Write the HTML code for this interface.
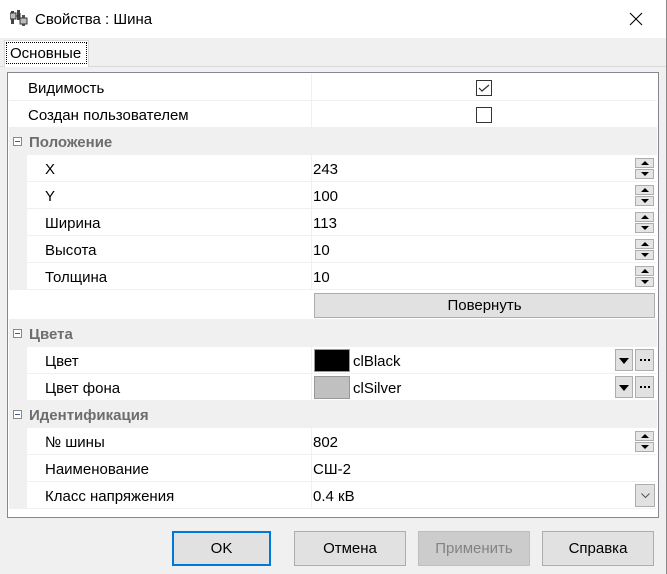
<!DOCTYPE html>
<html><head><meta charset="utf-8"><style>
*{margin:0;padding:0;box-sizing:border-box}
body{width:667px;height:574px;background:#f0f0f0;font-family:"Liberation Sans","Noto Sans CJK SC",sans-serif;font-size:15px;color:#000;position:relative;overflow:hidden}
.a{position:absolute}
.title{left:0;top:0;width:667px;height:38px;background:#fff}
.row{position:absolute;left:9px;width:648px;height:27px;border-bottom:1px solid #f0f0f0;background:#fff}
.row .l{position:absolute;top:6px}
.row .v{position:absolute;left:304px;top:6px}
.row .sep{position:absolute;left:302px;top:0;width:1px;height:26px;background:#f0f0f0}
.g{position:absolute;left:0;top:0;width:18px;height:27px;background:#f0f0f0}
.cat{background:#f0f0f0;border-bottom:none}
.cat .l{left:20px;font-weight:bold;color:#6d6d6d}
.mb{position:absolute;left:4px;top:9px;width:9px;height:9px;border:1px solid #8a8a8a;background:#fff}
.mb:after{content:"";position:absolute;left:1px;top:3px;width:5px;height:1px;background:#4a5a8a}
.spin{position:absolute;left:626px;top:3px;width:19px;height:21px}
.spin div{width:19px;height:10px;border:1px solid #adadad;background:#e5e5e5;position:relative;margin-bottom:1px}
.up:after{content:"";position:absolute;left:5px;top:2px;border:4px solid transparent;border-bottom:4px solid #000;border-top:0}
.dn:after{content:"";position:absolute;left:5px;top:2px;border:4px solid transparent;border-top:4px solid #000;border-bottom:0}
.btn{position:absolute;top:531px;height:35px;border:1px solid #adadad;background:#e1e1e1;text-align:center;line-height:34px}
.dots{position:absolute;left:626px;top:2px;width:19px;height:22px;background:#e1e1e1;border:1px solid #adadad}
.dots i{position:absolute;top:9px;width:2px;height:2px;background:#000}
</style></head><body>
<div class="a title"></div>
<svg class="a" style="left:10px;top:9px" width="20" height="18" viewBox="0 0 20 18"><rect x="1" y="2" width="3" height="13" fill="#444"/><rect x="7" y="1" width="3" height="10" fill="#444"/><rect x="12" y="6" width="3" height="11" fill="#555"/><rect x="0" y="4" width="6" height="6" fill="#bbb" stroke="#333"/><rect x="10" y="9" width="7" height="6" fill="#bbb" stroke="#333"/><path d="M6 7h4M10 4v6" stroke="#333"/></svg>
<div class="a" style="left:35px;top:11px;font-size:15px">Свойства : Шина</div>
<svg class="a" style="left:629px;top:12px" width="14" height="14"><path d="M1 1L13 13M13 1L1 13" stroke="#000" stroke-width="1.1"/></svg>
<div class="a" style="left:666px;top:0;width:1px;height:574px;background:#888"></div>
<div class="a" style="left:0;top:66px;width:666px;height:1px;background:#d9d9d9"></div>
<div class="a" style="left:4px;top:40px;width:85px;height:27px;background:#fff;border:1px solid #d9d9d9;border-bottom:none"></div>
<div class="a" style="left:6px;top:42px;width:81px;height:22px;border:1px dotted #000"></div>
<div class="a" style="left:10px;top:45px">Основные</div>
<div class="a" style="left:7px;top:72px;width:652px;height:446px;border:1px solid #828790;background:#fff"></div>

<div class="row" style="top:74px"><span class="l" style="left:19px">Видимость</span><div class="sep"></div>
<svg class="a" style="left:467px;top:6px" width="16" height="16"><rect x=".5" y=".5" width="15" height="15" fill="#fff" stroke="#333"/><path d="M3 8l3 3 7-6" stroke="#333" fill="none" stroke-width="1.2"/></svg></div>
<div class="row" style="top:101px"><span class="l" style="left:19px">Создан пользователем</span><div class="sep"></div>
<div class="a" style="left:467px;top:6px;width:16px;height:16px;border:1px solid #333"></div></div>
<div class="row cat" style="top:128px"><div class="mb"></div><span class="l">Положение</span></div>
<div class="row" style="top:155px"><div class="g"></div><span class="l" style="left:36px">X</span><div class="sep"></div><span class="v">243</span><div class="spin"><div class="up"></div><div class="dn"></div></div></div>
<div class="row" style="top:182px"><div class="g"></div><span class="l" style="left:36px">Y</span><div class="sep"></div><span class="v">100</span><div class="spin"><div class="up"></div><div class="dn"></div></div></div>
<div class="row" style="top:209px"><div class="g"></div><span class="l" style="left:36px">Ширина</span><div class="sep"></div><span class="v">113</span><div class="spin"><div class="up"></div><div class="dn"></div></div></div>
<div class="row" style="top:236px"><div class="g"></div><span class="l" style="left:36px">Высота</span><div class="sep"></div><span class="v">10</span><div class="spin"><div class="up"></div><div class="dn"></div></div></div>
<div class="row" style="top:263px"><div class="g"></div><span class="l" style="left:36px">Толщина</span><div class="sep"></div><span class="v">10</span><div class="spin"><div class="up"></div><div class="dn"></div></div></div>
<div class="row" style="top:290px;height:30px"><div class="a" style="left:305px;top:3px;width:341px;height:25px;border:1px solid #adadad;background:#e1e1e1;text-align:center;line-height:24px">Повернуть</div></div>
<div class="row cat" style="top:320px"><div class="mb"></div><span class="l">Цвета</span></div>
<div class="row" style="top:347px"><div class="g"></div><span class="l" style="left:36px">Цвет</span><div class="sep"></div>
<div class="a" style="left:305px;top:2px;width:36px;height:23px;background:#000;border:1px solid #999"></div><span class="v" style="left:344px">clBlack</span>
<div class="a" style="left:606px;top:2px;width:18px;height:22px;background:#e1e1e1;border:1px solid #adadad"><div class="a" style="left:3px;top:8px;border:5px solid transparent;border-top:6px solid #000;border-bottom:0"></div></div>
<div class="dots"><i style="left:4px"></i><i style="left:8px"></i><i style="left:12px"></i></div></div>
<div class="row" style="top:374px"><div class="g"></div><span class="l" style="left:36px">Цвет фона</span><div class="sep"></div>
<div class="a" style="left:305px;top:2px;width:36px;height:23px;background:#c0c0c0;border:1px solid #999"></div><span class="v" style="left:344px">clSilver</span>
<div class="a" style="left:606px;top:2px;width:18px;height:22px;background:#e1e1e1;border:1px solid #adadad"><div class="a" style="left:3px;top:8px;border:5px solid transparent;border-top:6px solid #000;border-bottom:0"></div></div>
<div class="dots"><i style="left:4px"></i><i style="left:8px"></i><i style="left:12px"></i></div></div>
<div class="row cat" style="top:401px"><div class="mb"></div><span class="l">Идентификация</span></div>
<div class="row" style="top:428px"><div class="g"></div><span class="l" style="left:36px">№ шины</span><div class="sep"></div><span class="v">802</span><div class="spin"><div class="up"></div><div class="dn"></div></div></div>
<div class="row" style="top:455px"><div class="g"></div><span class="l" style="left:36px">Наименование</span><div class="sep"></div><span class="v">СШ-2</span></div>
<div class="row" style="top:482px"><div class="g"></div><span class="l" style="left:36px">Класс напряжения</span><div class="sep"></div><span class="v">0.4 кВ</span>
<div class="a" style="left:626px;top:2px;width:20px;height:23px;background:#e1e1e1;border:1px solid #adadad"><svg class="a" style="left:5px;top:8px" width="9" height="6"><path d="M.5 .5L4.5 4.5 8.5 .5" stroke="#555" fill="none"/></svg></div></div>

<div class="btn" style="left:172px;width:99px;border:1px solid #0078d7;box-shadow:inset 0 0 0 1px #0078d7">OK</div>
<div class="btn" style="left:294px;width:112px">Отмена</div>
<div class="btn" style="left:418px;width:112px;background:#cccccc;border-color:#bfbfbf;color:#838383">Применить</div>
<div class="btn" style="left:542px;width:112px">Справка</div>
</body></html>
